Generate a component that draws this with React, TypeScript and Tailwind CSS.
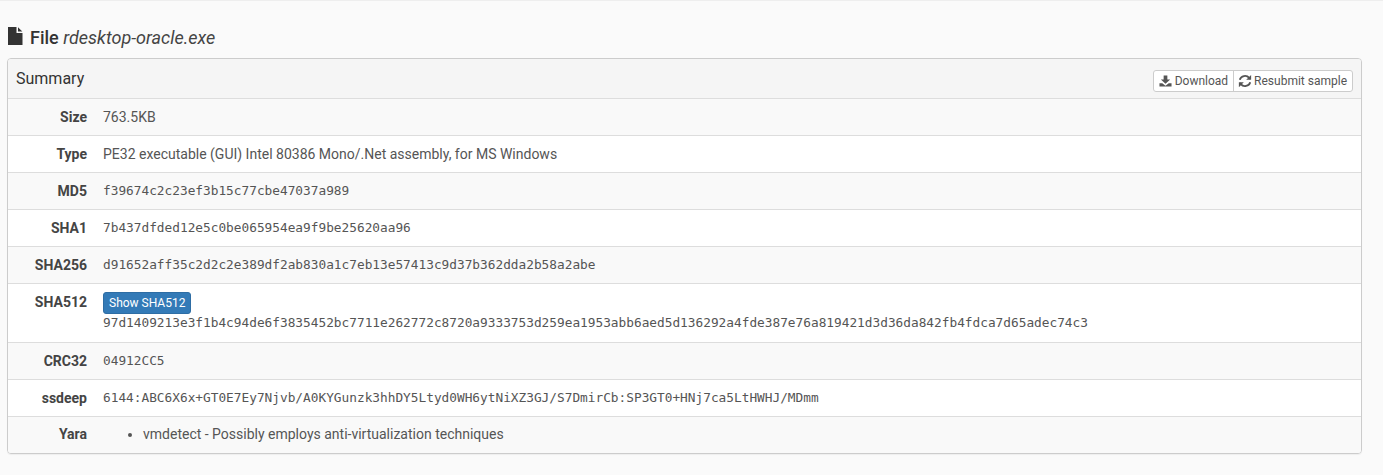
import type { ReactNode } from "react";

const mono = "font-['DejaVu_Sans_Mono',monospace] text-[12.79px] text-[#555555] relative -top-[1px]";

function Row({ label, striped, children, h = "h-[37px]" }: { label: string; striped: boolean; children: ReactNode; h?: string }) {
  return (
    <div className={`flex border-b border-[#dddddd] ${h} ${striped ? "bg-[#f9f9f9]" : "bg-white"}`}>
      <div className="w-[71px] ml-[8px] shrink-0 pt-[8px] text-right font-bold leading-5 text-[#444444]">{label}</div>
      <div className="pl-[16px] pr-2 pt-[8px] flex-1 min-w-0 leading-5">{children}</div>
    </div>
  );
}

export default function App() {
  return (
    <div className="w-[1383px] h-[475px] overflow-hidden bg-[#fafafa] border-t border-[#eeeeee] text-[#555555] font-['Roboto',sans-serif] text-[14px] px-[7px]">
      <h3 className="flex items-center h-[22px] mt-[26px] ml-[1px] text-[18px] font-medium leading-[22px] text-[#333333]">
        <svg width="15" height="18" viewBox="0 0 15 18" className="mr-[7px] mb-[4px] fill-[#333333]">
          <path d="M0 0H8.5V6H14.5V18H0Z" />
          <path d="M10 0.3L14.3 4.6H10Z" />
        </svg>
        <span>File&nbsp;</span>
        <em className="font-normal italic text-[#444444]">rdesktop-oracle.exe</em>
      </h3>
      <div className="mt-[9px] w-[1355px] border border-[#cccccc] rounded-[4px] overflow-hidden shadow-[0_1px_1px_rgba(0,0,0,0.05)]">
        <div className="flex items-start justify-between h-[40px] bg-[#f5f5f5] border-b border-[#dddddd] pl-[8px] pr-[8px]">
          <span className="text-[16px] leading-[39px] font-normal text-[#333333]">Summary</span>
          <div className="flex h-[22px] mt-[11px] text-[12px] text-[#555555] bg-white border border-[#cccccc] rounded-[3px]">
            <button className="flex items-center gap-[3px] pl-[5px] pr-[5px] border-r border-[#cccccc]">
              <svg width="13" height="12" viewBox="0 0 14 12" className="fill-[#555555]">
                <path d="M5 0H9V4.5H12L7 9 2 4.5H5Z" />
                <path d="M0.5 8.5H3.5L7 11 10.5 8.5H13.5V12H0.5Z" />
              </svg>
              Download
            </button>
            <button className="flex items-center gap-[2px] pl-[4px] pr-[5px]">
              <svg width="14" height="14" viewBox="0 0 24 24" fill="none" stroke="#555555" strokeWidth="3.2">
                <path d="M3 10A9.5 9.5 0 0 1 19.2 6.5L21 8.5" />
                <path d="M21 14A9.5 9.5 0 0 1 4.8 17.5L3 15.5" />
                <path d="M22.5 1.5V10H14Z" fill="#555555" stroke="none" />
                <path d="M1.5 22.5V14H10Z" fill="#555555" stroke="none" />
              </svg>
              Resubmit sample
            </button>
          </div>
        </div>
        <Row label="Size" striped><span>763.5KB</span></Row>
        <Row label="Type" striped={false}><span>PE32 executable (GUI) Intel 80386 Mono/.Net assembly, for MS Windows</span></Row>
        <Row label="MD5" striped><code className={mono}>f39674c2c23ef3b15c77cbe47037a989</code></Row>
        <Row label="SHA1" striped={false}><code className={mono}>7b437dfded12e5c0be065954ea9f9be25620aa96</code></Row>
        <Row label="SHA256" striped><code className={mono}>d91652aff35c2d2c2e389df2ab830a1c7eb13e57413c9d37b362dda2b58a2abe</code></Row>
        <Row label="SHA512" striped={false} h="h-[59px]">
          <div className="flex flex-col items-start">
            <button className="h-[22px] px-[5px] bg-[#337ab7] border border-[#2e6da4] rounded-[3px] text-white text-[12px] leading-[18px]">Show SHA512</button>
            <code className={`${mono} leading-[20px]`}>97d1409213e3f1b4c94de6f3835452bc7711e262772c8720a9333753d259ea1953abb6aed5d136292a4fde387e76a819421d3d36da842fb4fdca7d65adec74c3</code>
          </div>
        </Row>
        <Row label="CRC32" striped><code className={mono}>04912CC5</code></Row>
        <Row label="ssdeep" striped={false}><code className={mono}>6144:ABC6X6x+GT0E7Ey7Njvb/A0KYGunzk3hhDY5Ltyd0WH6ytNiXZ3GJ/S7DmirCb:SP3GT0+HNj7ca5LtHWHJ/MDmm</code></Row>
        <div className="flex h-[36px] bg-[#f9f9f9]">
          <div className="w-[71px] ml-[8px] shrink-0 pt-[7px] text-right font-bold leading-5 text-[#444444]">Yara</div>
          <div className="pl-[16px] pt-[7px] leading-5">
            <ul className="list-disc pl-[40px] m-0"><li>vmdetect - Possibly employs anti-virtualization techniques</li></ul>
          </div>
        </div>
      </div>
    </div>
  );
}
